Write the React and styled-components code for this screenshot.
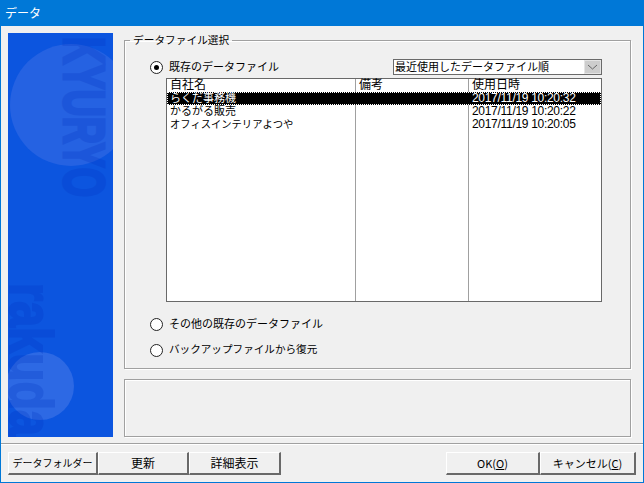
import React from "react"
import styled, { createGlobalStyle } from "styled-components"

const GlobalStyle = createGlobalStyle`
  html, body { margin: 0; padding: 0; background: #f0f0f0; }
  * { box-sizing: border-box; }
`

const Dialog = styled.div`
  width: 644px;
  height: 483px;
  display: flex;
  flex-direction: column;
  background: #f0f0f0;
  border: 1px solid #0078d7;
  border-top: 0;
  font-family: "Noto Sans CJK JP", sans-serif;
  font-size: 11px;
  color: #000;
  overflow: hidden;
`

const TitleBar = styled.div`
  height: 26px;
  margin: 0 -1px;
  padding: 0 0 2px 5px;
  display: flex;
  align-items: center;
  flex-shrink: 0;
  background: #0078d7;
  color: #fff;
  font-size: 12px;
`

const Body = styled.div`
  flex: 1;
  display: flex;
  padding: 7px 12px 0 7px;
`

const SidePanel = styled.div`
  width: 105px;
  height: 404px;
  flex-shrink: 0;
  background: #0c55df;
  margin-right: 11px;
`

const SideArt = styled.svg`
  display: block;
`

const Content = styled.div`
  flex: 1;
  display: flex;
  flex-direction: column;
`

const GroupBox = styled.fieldset`
  margin: 0;
  padding: 0;
  height: 336px;
  border: 1px solid #a0a0a0;
  box-shadow: inset 1px 1px 0 #fff, 1px 1px 0 #fff;
  min-width: 0;
`

const GroupTitle = styled.legend`
  margin-left: 5px;
  padding: 0 3px;
  height: 14px;
  line-height: 14px;
  font-size: 10.7px;
  white-space: nowrap;
`

const StatusBox = styled.div`
  height: 58px;
  margin-top: 10px;
  border: 1px solid #a0a0a0;
  box-shadow: inset 1px 1px 0 #fff, 1px 1px 0 #fff;
`

const OptionRow = styled.div`
  height: 16px;
  margin-top: ${(p) => p.$top}px;
  padding-left: 25px;
  display: flex;
  align-items: center;
`

const RadioMark = styled.span`
  width: 13px;
  height: 13px;
  flex-shrink: 0;
  border: 1px solid #222;
  border-radius: 50%;
  background: #fff;
  display: flex;
  align-items: center;
  justify-content: center;
  margin-right: 6px;

  &::after {
    content: "";
    display: ${(p) => (p.$on ? "block" : "none")};
    width: 5px;
    height: 5px;
    border-radius: 50%;
    background: #000;
  }
`

const OptionLabel = styled.span`
  line-height: 14px;
  padding-bottom: 2px;
  font-size: ${(p) => p.$size || 11}px;
  white-space: nowrap;
`

const Combo = styled.div`
  width: 209px;
  height: 16px;
  margin: 0 28px 0 auto;
  display: flex;
  align-items: center;
  justify-content: space-between;
  background: #fff;
  border: 1px solid #6a6a6a;
  padding-left: 1px;
  white-space: nowrap;
`

const ComboText = styled.span`
  line-height: 12px;
  padding-bottom: 2px;
`

const ComboArrow = styled.span`
  width: 17px;
  height: 14px;
  display: flex;
  align-items: center;
  justify-content: center;
  background: #cdcdcd;
  border: 1px solid #e4e4e4;
`

const FileList = styled.div`
  height: 224px;
  margin: 3px 28px 0 41px;
  display: flex;
  flex-direction: column;
  background: #fff;
  border: 1px solid #696969;
`

const ListRow = styled.div`
  display: grid;
  grid-template-columns: 189px 113px 1fr;
  height: 13px;
  flex: ${(p) => (p.$fill ? 1 : "none")};
  background: ${(p) => (p.$selected ? "#000" : "transparent")};
  color: ${(p) => (p.$selected ? "#fff" : "#000")};
  outline: ${(p) => (p.$selected ? "1px dotted #fff" : "none")};
  outline-offset: -1px;
`

const ListCell = styled.div`
  padding-left: 3px;
  line-height: ${(p) => (p.$head ? 9 : 11)}px;
  font-size: ${(p) => (p.$head ? 12 : p.$size || 11)}px;
  white-space: nowrap;
  border-right: ${(p) => (p.$last || p.$plain ? "0" : "1px solid #a0a0a0")};
`

const DateCell = styled(ListCell)`
  padding-left: 3px;
  line-height: 13px;
  font-family: "Liberation Sans", sans-serif;
  font-size: 12px;
  letter-spacing: -0.3px;
`

const Footer = styled.div`
  height: 39px;
  flex-shrink: 0;
  border-top: 1px solid #a0a0a0;
  box-shadow: inset 0 1px 0 #fff;
  padding: 8px 7px 0 7px;
  display: flex;
  justify-content: space-between;
`

const ButtonGroup = styled.div`
  display: flex;
`

const DialogButton = styled.button`
  width: ${(p) => p.$w}px;
  height: 23px;
  padding: 0;
  margin: 0;
  background: #f0f0f0;
  border: 0;
  border-top: 1px solid #fff;
  border-left: 1px solid #fff;
  border-right: 2px solid #696969;
  border-bottom: 2px solid #696969;
  font-family: inherit;
  font-size: ${(p) => p.$size || 11}px;
  line-height: 18px;
  color: #000;
  white-space: nowrap;
`

const rows = [
  { name: "らくだ事務機", note: "", date: "2017/11/19 10:20:32", selected: true },
  { name: "かるがる販売", note: "", date: "2017/11/19 10:20:22" },
  { name: "オフィスインテリアよつや", note: "", date: "2017/11/19 10:20:05", size: 10.3 },
]

export default function App() {
  return (
    <Dialog>
      <GlobalStyle />
      <TitleBar>データ</TitleBar>
      <Body>
        <SidePanel>
          <SideArt width="105" height="404" viewBox="0 0 105 404">
            <circle cx="63" cy="72" r="61" fill="#2562e2" />
            <circle cx="32" cy="353" r="34" fill="#2d69e4" />
            <text
              transform="translate(55.5 4) rotate(90)"
              fontFamily="Liberation Sans"
              fontWeight="700"
              fontSize="57"
              textLength="160"
              lengthAdjust="spacingAndGlyphs"
              fill="#0030c0"
              stroke="#0030c0"
              strokeWidth="3"
              opacity="0.22"
            >
              KYURYO
            </text>
            <text
              transform="translate(2 250) rotate(90)"
              fontFamily="Liberation Sans"
              fontWeight="700"
              fontSize="62"
              textLength="153"
              lengthAdjust="spacingAndGlyphs"
              fill="#0030c0"
              stroke="#0030c0"
              strokeWidth="2"
              opacity="0.22"
            >
              rakuda
            </text>
          </SideArt>
        </SidePanel>
        <Content>
          <GroupBox>
            <GroupTitle>データファイル選択</GroupTitle>
            <OptionRow $top={12}>
              <RadioMark $on />
              <OptionLabel>既存のデータファイル</OptionLabel>
              <Combo>
                <ComboText>最近使用したデータファイル順</ComboText>
                <ComboArrow>
                  <svg width="11" height="6" viewBox="0 0 11 6">
                    <polyline points="1,1 5.5,5 10,1" fill="none" stroke="#666" strokeWidth="1" />
                  </svg>
                </ComboArrow>
              </Combo>
            </OptionRow>
            <FileList>
              <ListRow>
                <ListCell $head>自社名</ListCell>
                <ListCell $head>備考</ListCell>
                <ListCell $head $last>使用日時</ListCell>
              </ListRow>
              {rows.map((r) => (
                <ListRow key={r.date} $selected={r.selected}>
                  <ListCell $plain={r.selected} $size={r.size}>{r.name}</ListCell>
                  <ListCell $plain={r.selected}>{r.note}</ListCell>
                  <DateCell $last>{r.date}</DateCell>
                </ListRow>
              ))}
              <ListRow $fill>
                <ListCell />
                <ListCell />
                <ListCell $last />
              </ListRow>
            </FileList>
            <OptionRow $top={14}>
              <RadioMark />
              <OptionLabel>その他の既存のデータファイル</OptionLabel>
            </OptionRow>
            <OptionRow $top={10}>
              <RadioMark />
              <OptionLabel $size={10.6}>バックアップファイルから復元</OptionLabel>
            </OptionRow>
          </GroupBox>
          <StatusBox />
        </Content>
      </Body>
      <Footer>
        <ButtonGroup>
          <DialogButton $w={90} $size={10}>データフォルダー</DialogButton>
          <DialogButton $w={91} $size={12}>更新</DialogButton>
          <DialogButton $w={92} $size={12}>詳細表示</DialogButton>
        </ButtonGroup>
        <ButtonGroup>
          <DialogButton $w={94}>OK(<u>O</u>)</DialogButton>
          <DialogButton $w={96}>キャンセル(<u>C</u>)</DialogButton>
        </ButtonGroup>
      </Footer>
    </Dialog>
  )
}
